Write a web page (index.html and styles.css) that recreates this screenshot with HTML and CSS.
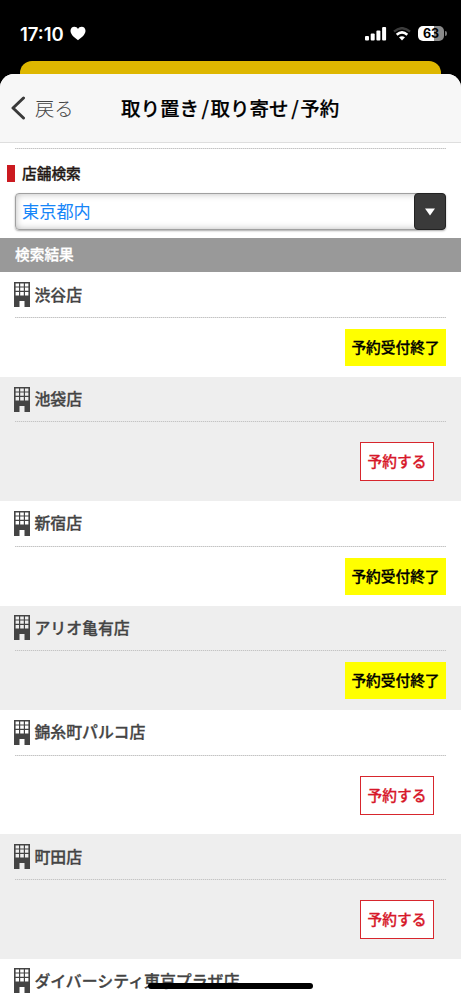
FILE: index.html
```
<!DOCTYPE html>
<html lang="ja">
<head>
<meta charset="utf-8">
<title>取り置き/取り寄せ/予約</title>
<link rel="stylesheet" href="styles.css">
</head>
<body>
<svg class="defs" width="0" height="0" aria-hidden="true">
  <symbol id="building" viewBox="0 0 16 25">
    <path fill="#444" fill-rule="evenodd" d="M0 0H16V25H10.5V19H5.5V25H0ZM1.6 1.6V4.4H5V1.6ZM6.200 1.6V4.4H9.800V1.6ZM11 1.6V4.4H14.400V1.6ZM1.6 5.6V8.800H5V5.600ZM6.200 5.600V8.800H9.800V5.600ZM11 5.600V8.800H14.400V5.600ZM1.600 10V13.400H5V10ZM6.200 10V13.400H9.800V10ZM11 10V13.400H14.400V10Z"/>
  </symbol>
</svg>
<div class="phone">
  <div class="status">
    <span class="time">17:10</span>
    <svg class="heart" width="16" height="15" viewBox="0 0 16 15"><path fill="#fff" d="M8 14.2C5 12.1.5 8.7.5 4.8.5 2.3 2.2.7 4.3.7 6 .7 7.300 1.600 8 3 8.700 1.600 10 .7 11.700.7 13.800.7 15.500 2.300 15.500 4.800 15.500 8.700 11 12.100 8 14.200Z"/></svg>
    <span class="spacer"></span>
    <svg class="signal" width="22" height="14" viewBox="0 0 22 14" fill="#fff"><rect x="0" y="9" width="4" height="4.500" rx="1"/><rect x="5.700" y="6.500" width="4" height="7" rx="1"/><rect x="11.400" y="3.500" width="4" height="10" rx="1"/><rect x="17.100" y="0" width="4" height="13.500" rx="1"/></svg>
    <svg class="wifi" width="18" height="14" viewBox="0 0 18 14" fill="none"><path d="M1 4.700Q9-2.300 17 4.700" stroke="#3c3c3c" stroke-width="2.400"/><path d="M3.700 7.700Q9 3.100 14.300 7.700" stroke="#fff" stroke-width="2.600"/><path d="M6 10.300Q9 8 12 10.300L9 13.500Z" fill="#fff"/></svg>
    <span class="battery"><span class="level">63</span></span><span class="tip"></span>
  </div>
  <div class="behind"></div>
  <main class="sheet">
    <header class="nav">
      <svg class="chevron" width="15" height="24" viewBox="0 0 15 24"><path d="M12.500 2 2 12 12.500 22" fill="none" stroke="#3a3a3a" stroke-width="3" stroke-linecap="round" stroke-linejoin="round"/></svg>
      <span class="back">戻る</span>
      <h1>取り置き<i>/</i>取り寄せ<i>/</i>予約</h1>
    </header>
    <section class="search">
      <div class="dots"></div>
      <h2>店舗検索</h2>
      <div class="select"><span>東京都内</span><b class="drop"><svg width="10" height="8" viewBox="0 0 10 8"><path fill="#fff" d="M0 .5H10L5 7.500Z"/></svg></b></div>
    </section>
    <h3>検索結果</h3>
    <div class="row closed"><div class="name"><svg><use href="#building"/></svg>渋谷店</div><div class="dots"></div><span class="ended">予約受付終了</span></div>
    <div class="row open gray"><div class="name"><svg><use href="#building"/></svg>池袋店</div><div class="dots"></div><span class="reserve">予約する</span></div>
    <div class="row closed"><div class="name"><svg><use href="#building"/></svg>新宿店</div><div class="dots"></div><span class="ended">予約受付終了</span></div>
    <div class="row closed gray"><div class="name"><svg><use href="#building"/></svg>アリオ亀有店</div><div class="dots"></div><span class="ended">予約受付終了</span></div>
    <div class="row open"><div class="name"><svg><use href="#building"/></svg>錦糸町パルコ店</div><div class="dots"></div><span class="reserve">予約する</span></div>
    <div class="row open gray"><div class="name"><svg><use href="#building"/></svg>町田店</div><div class="dots"></div><span class="reserve">予約する</span></div>
    <div class="row last"><div class="name"><svg><use href="#building"/></svg>ダイバーシティ東京プラザ店</div></div>
  </main>
  <div class="home"></div>
</div>
</body>
</html>
```

FILE: styles.css
```
* { box-sizing: border-box; }
body { margin: 0; background: #000; font-family: "Noto Sans CJK JP", sans-serif; }
.defs { display: block; }
.phone { position: relative; width: 461px; height: 999px; overflow: hidden; background: #000; }
.status { height: 61px; padding: 6px 14px 0 20px; display: flex; align-items: center; }
.time { color: #fff; font: 600 18.5px/24px Inter, sans-serif; letter-spacing: 0; width: 45px; white-space: nowrap; }
.heart { margin-left: 5px; }
.spacer { flex: 1; }
.signal { margin-right: 6px; }
.wifi { margin-right: 7px; }
.battery { width: 26px; height: 15px; border-radius: 5px; background: linear-gradient(90deg, #fff 63%, #8a8a8a 63%); display: flex; justify-content: center; align-items: center; }
.level { font: 700 12.5px/15px Inter, sans-serif; color: #000; }
.tip { width: 2px; height: 5px; margin-left: 1px; border-radius: 0 2px 2px 0; background: #777; }
.behind { height: 13px; margin: 0 20px; border-radius: 12px 12px 0 0; background: #deb700; }
.sheet { height: 925px; border-radius: 14px 14px 0 0; background: #fff; overflow: hidden; }
.nav { height: 69px; display: flex; align-items: center; padding-left: 11px; background: #f7f7f7; border-bottom: 1px solid #dedede; }
.chevron { flex: none; }
.back { margin-left: 9px; width: 86px; color: #444; font-size: 19.3px; font-weight: 300; line-height: 28px; }
h1 { margin: 0; font-size: 19.5px; font-weight: 500; line-height: 28px; color: #000; white-space: nowrap; -webkit-text-stroke: .2px #000; }
h1 i { font-style: normal; margin: 0 1.400px 0 2.600px; }
.search { height: 95px; padding: 5px 15px 0; }
.dots { flex: none; height: 1px; background: repeating-linear-gradient(90deg, #c4c4c4 0 1px, #e2e2e2 1px 2px); }
h2, h3, .name, .ended, .reserve { font-weight: 500; -webkit-text-stroke: .3px currentColor; }
h2 { margin: 16px 0 0 -8px; height: 17px; border-left: 8px solid #cb1a20; padding-left: 7px; font-size: 14.700px; line-height: 15px; color: #231815; }
.select { margin-top: 11px; height: 37px; display: flex; align-items: center; border: 1px solid #a0a0a0; border-radius: 4px; box-shadow: inset 0 0 7px #bbb, 0 1px 2px #aaa; padding: 0 0 2px 6px; font-size: 17.200px; line-height: 24px; color: #1685f8; }
.select span { flex: 1; }
.drop { width: 32px; height: 37px; margin: 2px -1px 0 0; border: 1px solid #222; border-radius: 4px; background: #3a3a3a; display: flex; align-items: center; justify-content: center; }
h3 { margin: 0; height: 34.300px; padding-left: 15px; background: #999; color: #fff; font-size: 14.700px; line-height: 32px; }
.row { padding: 0 15px; display: flex; flex-direction: column; color: #444; }
.gray { background: #eee; }
.closed { height: 104.500px; }
.open { height: 124.300px; }
.last { height: 60px; }
.name { height: 44.500px; display: flex; align-items: center; font-size: 15.900px; line-height: 24px; gap: 4px; }
.name svg { width: 16px; height: 25px; flex: none; margin: 0 0 0 -.6px; }
.ended { align-self: flex-end; margin-top: 11px; width: 101px; height: 37px; background: #ff0; color: #000; font-size: 14.700px; line-height: 35px; text-align: center; }
.reserve { align-self: flex-end; margin: 20px 12px 0 0; width: 74px; height: 39px; border: 1px solid #d7262d; background: #fff; color: #d7182a; font-size: 14.700px; line-height: 35px; text-align: center; }
.home { position: absolute; left: 148px; top: 983px; width: 165px; height: 6px; border-radius: 3px; background: #000; }
```
